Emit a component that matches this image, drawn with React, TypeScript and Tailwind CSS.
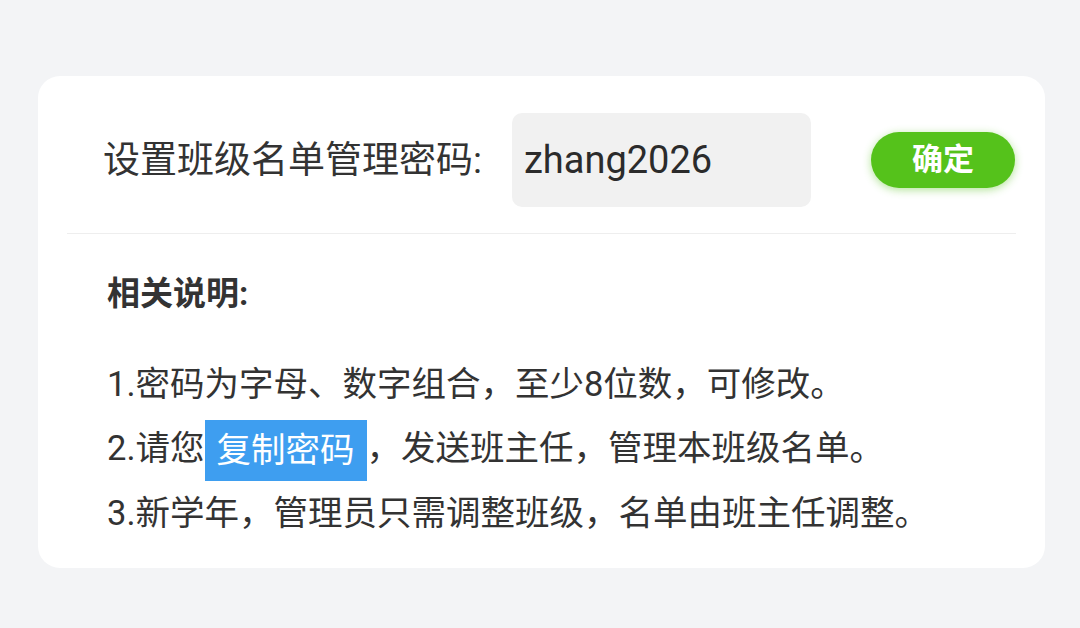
import React, { useState } from 'react';

const font = { fontFamily: 'Roboto, "Noto Sans CJK SC", sans-serif' };

const App: React.FC = () => {
  const [password, setPassword] = useState<string>('zhang2026');

  return (
    <div className="min-h-[628px] w-[1080px] bg-[#f3f4f6] pt-[76px] pl-[38px]" style={font}>
      <div className="w-[1007px] rounded-[22px] bg-white">
        {/* password row */}
        <div className="flex items-center pt-[37px] pb-[26px] pl-[65px]">
          <span className="text-[37px] leading-none text-[#333333]">设置班级名单管理密码:</span>
          <input
            className="ml-[30px] h-[94px] w-[299px] rounded-[10px] bg-[#f1f1f1] px-[12px] text-[38px] text-[#2b2b2b] outline-none"
            value={password}
            onChange={(e) => setPassword(e.target.value)}
          />
          <button className="ml-[60px] h-[56px] w-[144px] rounded-full bg-[#55c21b] text-[31px] font-bold text-white shadow-[0_2px_8px_rgba(85,194,27,0.45)]">
            确定
          </button>
        </div>

        <div className="mx-[29px] h-px bg-[#eeeeee]" />

        {/* notes */}
        <div className="pl-[69px] pt-[36px] pb-[23px] text-[#333333]">
          <div className="text-[33px] font-bold leading-[48px]">相关说明:</div>
          <div className="mt-[34px] text-[34.5px] leading-[64px]">
            <div>1.密码为字母、数字组合，至少8位数，可修改。</div>
            <div>
              2.请您
              <span className="inline-block h-[61px] bg-[#3e9ef0] px-[12px] align-middle leading-[61px] text-white">
                复制密码
              </span>
              ，发送班主任，管理本班级名单。
            </div>
            <div>3.新学年，管理员只需调整班级，名单由班主任调整。</div>
          </div>
        </div>
      </div>
    </div>
  );
};

export default App;
